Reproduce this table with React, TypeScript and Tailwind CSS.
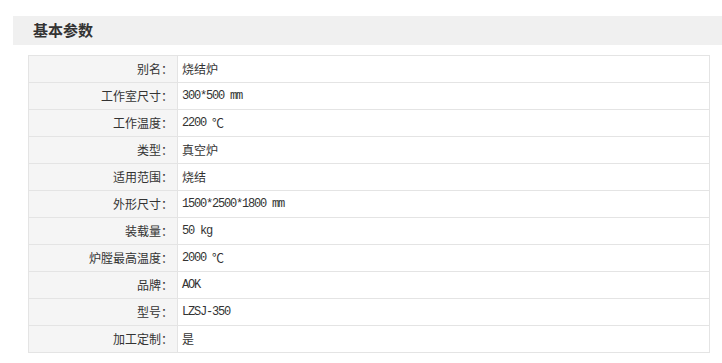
const cjk = '"Noto Sans CJK SC", "Noto Sans", sans-serif';
const mono = '"Liberation Mono", "Noto Sans CJK SC", monospace';

type Row = { label: string; value: string; unit?: string; latin?: boolean };

const ROWS: Row[] = [
  { label: "别名：", value: "烧结炉" },
  { label: "工作室尺寸：", value: "300*500 mm", latin: true },
  { label: "工作温度：", value: "2200 ", unit: "℃", latin: true },
  { label: "类型：", value: "真空炉" },
  { label: "适用范围：", value: "烧结" },
  { label: "外形尺寸：", value: "1500*2500*1800 mm", latin: true },
  { label: "装载量：", value: "50 kg", latin: true },
  { label: "炉膛最高温度：", value: "2000 ", unit: "℃", latin: true },
  { label: "品牌：", value: "AOK", latin: true },
  { label: "型号：", value: "LZSJ-350", latin: true },
  { label: "加工定制：", value: "是" },
];

function ParamRow({ row }: { row: Row }) {
  return (
    <div className="flex h-[27px] border-b border-[#e4e4e4]">
      <div
        className="flex w-[149px] shrink-0 items-center justify-end border-r border-[#e4e4e4] bg-[#f5f5f5] pr-[4px] text-[12px] text-[#333]"
        style={{ fontFamily: cjk }}
      >
        {row.label}
      </div>
      <div className="flex flex-1 items-center pl-[4px] text-[#333]">
        {row.latin ? (
          <span
            className="whitespace-pre text-[12px] tracking-[-1.2px]"
            style={{ fontFamily: mono }}
          >
            {row.value}
          </span>
        ) : (
          <span className="text-[12px]" style={{ fontFamily: cjk }}>
            {row.value}
          </span>
        )}
        {row.unit && (
          <span className="text-[12px]" style={{ fontFamily: cjk }}>
            {row.unit}
          </span>
        )}
      </div>
    </div>
  );
}

export default function App() {
  return (
    <div className="h-[363px] w-[722px] overflow-hidden bg-white pt-[16px]">
      <div className="ml-[13px] flex h-[29px] items-center bg-[#f0f0f0] pl-[20px]">
        <h2
          className="text-[15px] font-bold text-[#333]"
          style={{ fontFamily: cjk }}
        >
          基本参数
        </h2>
      </div>
      <div className="ml-[28px] mt-[10px] w-[682px] border-l border-r border-t border-[#e4e4e4]">
        {ROWS.map((row) => (
          <ParamRow key={row.label} row={row} />
        ))}
      </div>
    </div>
  );
}
